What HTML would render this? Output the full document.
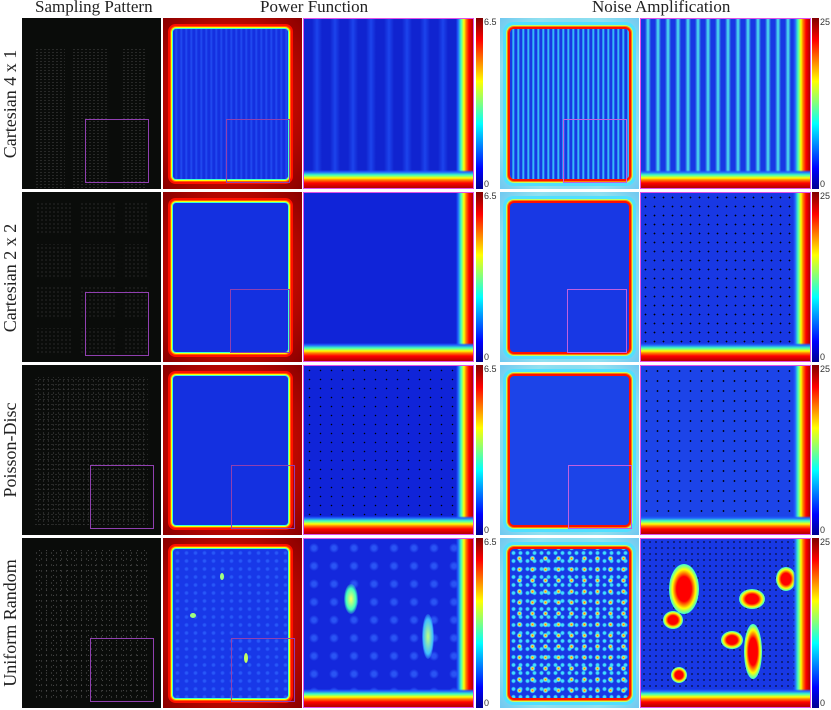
<!DOCTYPE html>
<html><head><meta charset="utf-8"><style>
*{margin:0;padding:0;box-sizing:border-box}
body{width:831px;height:710px;background:#fff;position:relative;overflow:hidden;font-family:"Liberation Serif",serif;color:#222}
.h{position:absolute;top:-3px;font-size:17px;white-space:nowrap}
.rl{position:absolute;left:-5px;width:30px;font-size:18px;white-space:nowrap;transform:rotate(-90deg);transform-origin:center;text-align:center;display:flex;justify-content:center}
.p{position:absolute;overflow:hidden}
.s{background:#0a0c0a;width:139px}
.pf{width:139px;background:radial-gradient(ellipse at center,#d81000 30%,#c00800 60%,#8a0000 100%)}
.pfi{position:absolute;left:10px;top:11px;right:14px;bottom:10px;background:#1430e0;border-radius:3px;box-shadow:0 0 0 1px #40ffd0,0 0 0 2px #ffff00,0 0 0 3px #ff6000,0 0 0 5px #ff1000;}
.pz{width:171px;background:#1024d8;border:1.5px solid #e050e8}
.nf{width:139px;background:radial-gradient(ellipse at center,#60c8f0 40%,#90e0f0 75%,#70c8f0 100%)}
.nfi{position:absolute;left:10px;top:11px;right:10px;bottom:10px;background:#1838e4;border-radius:4px;box-shadow:0 0 0 2px #ff1000,0 0 0 3px #ff8000,0 0 0 4px #c0ff60,0 0 0 7px #50e0ff}
.nz{width:171px;background:#1838e4;border:1.5px solid #e050e8}
.box{position:absolute;border:1px solid #9040b0}
.cb{position:absolute;width:7px;height:171px;background:linear-gradient(to bottom,#800000 0%,#f00 13%,#ff8000 25%,#ff0 37%,#80ff80 50%,#0ff 62%,#0080ff 75%,#00f 88%,#000090 100%)}
.cl{position:absolute;font-size:9px;font-family:"Liberation Sans",sans-serif;color:#333}
.bandR{position:absolute;top:0;bottom:0;right:0;width:17px;background:linear-gradient(to left,#b00000 0,#ff0000 4px,#ff8000 7px,#ffff00 9px,#40ffc0 12px,#2060ff 15px,rgba(20,40,216,0) 17px)}
.bandB{position:absolute;left:0;right:0;bottom:0;height:18px;background:linear-gradient(to top,#b00000 0,#ff0000 5px,#ff8000 8px,#ffff00 10px,#40ffc0 13px,#2060ff 16px,rgba(20,40,216,0) 18px)}
.bl{position:absolute;border-radius:50%}
</style></head><body>
<div class="h" style="left:35px">Sampling Pattern</div>
<div class="h" style="left:260px">Power Function</div>
<div class="h" style="left:592px">Noise Amplification</div>

<div class="rl" style="top:94px;height:20px">Cartesian 4 x 1</div>
<div class="rl" style="top:268px;height:20px">Cartesian 2 x 2</div>
<div class="rl" style="top:440px;height:20px">Poisson-Disc</div>
<div class="rl" style="top:613px;height:20px">Uniform Random</div>

<!-- Row 1 -->
<div class="p s" style="left:22px;top:18px;height:171px">
 <div style="position:absolute;left:13px;top:30px;width:30px;height:147px;background:radial-gradient(circle,#444 0.5px,transparent 0.8px) 0 0/4px 3px"></div>
 <div style="position:absolute;left:50px;top:30px;width:36px;height:147px;background:radial-gradient(circle,#444 0.5px,transparent 0.8px) 0 0/4px 3px"></div>
 <div style="position:absolute;left:100px;top:30px;width:24px;height:147px;background:radial-gradient(circle,#444 0.5px,transparent 0.8px) 0 0/4px 3px"></div>
 <div class="box" style="left:63px;top:101px;width:64px;height:64px"></div>
</div>
<div class="p pf" style="left:163px;top:18px;height:171px">
 <div class="pfi" style="background:repeating-linear-gradient(to right,#1430e0 0,#1430e0 2px,#2450f4 3px,#1430e0 5px)"></div>
 <div class="box" style="left:63px;top:101px;width:64px;height:64px"></div>
</div>
<div class="p pz" style="left:303px;top:18px;height:171px;background:repeating-linear-gradient(to right,#1024d0 0,#1024d0 8px,#1c44ec 13px,#1024d0 18px)">
 <div class="bandR"></div><div class="bandB" style="height:24px"></div>
</div>
<div class="cb" style="left:476px;top:18px"></div>
<div class="cl" style="left:484px;top:17px">6.5</div><div class="cl" style="left:484px;top:179px">0</div>
<div class="p nf" style="left:500px;top:18px;height:171px">
 <div class="nfi" style="background:repeating-linear-gradient(to right,#1838e4 0,#1838e4 2px,#40e0ff 3px,#1838e4 5px)"></div>
 <div class="box" style="left:63px;top:101px;width:64px;height:64px;border-color:#c060e0"></div>
</div>
<div class="p nz" style="left:640px;top:18px;height:171px;background:repeating-linear-gradient(to right,#1838e4 0,#1838e4 4px,#50e8f0 7px,#1838e4 10px)">
 <div class="bandR"></div><div class="bandB" style="height:26px"></div>
</div>
<div class="cb" style="left:812px;top:18px"></div>
<div class="cl" style="left:820px;top:17px">25</div><div class="cl" style="left:820px;top:179px">0</div>

<!-- Row 2 -->
<div class="p s" style="left:22px;top:192px;height:170px">
 <div style="position:absolute;left:14px;top:10px;width:112px;height:152px;background:radial-gradient(circle,#444 0.5px,transparent 0.8px) 0 0/4px 4px;-webkit-mask:repeating-linear-gradient(to right,#000 0 36px,transparent 36px 44px),repeating-linear-gradient(#000 0 33px,transparent 33px 42px);mask-composite:intersect;-webkit-mask-composite:source-in"></div>
 <div class="box" style="left:63px;top:100px;width:64px;height:64px"></div>
</div>
<div class="p pf" style="left:163px;top:192px;height:170px">
 <div class="pfi"></div>
 <div class="box" style="left:67px;top:97px;width:60px;height:64px"></div>
</div>
<div class="p pz" style="left:303px;top:192px;height:170px">
 <div class="bandR"></div><div class="bandB"></div>
</div>
<div class="cb" style="left:476px;top:192px;height:170px"></div>
<div class="cl" style="left:484px;top:191px">6.5</div><div class="cl" style="left:484px;top:352px">0</div>
<div class="p nf" style="left:500px;top:192px;height:170px">
 <div class="nfi"></div>
 <div class="box" style="left:67px;top:97px;width:60px;height:64px;border-color:#c060e0"></div>
</div>
<div class="p nz" style="left:640px;top:192px;height:170px;background:#1838e4 radial-gradient(circle,#000 0.7px,transparent 1px) 0 0/9px 9px">
 <div class="bandR"></div><div class="bandB"></div>
</div>
<div class="cb" style="left:812px;top:192px;height:170px"></div>
<div class="cl" style="left:820px;top:191px">25</div><div class="cl" style="left:820px;top:352px">0</div>

<!-- Row 3 -->
<div class="p s" style="left:22px;top:365px;height:170px">
 <div style="position:absolute;left:12px;top:12px;width:114px;height:148px;background:radial-gradient(circle,#444 0.5px,transparent 0.8px) 0 0/4px 5px,radial-gradient(circle,#444 0.5px,transparent 0.8px) 2px 2px/5px 4px"></div>
 <div class="box" style="left:68px;top:100px;width:64px;height:64px"></div>
</div>
<div class="p pf" style="left:163px;top:365px;height:170px">
 <div class="pfi" style="background:#1430e0"></div>
 <div class="box" style="left:68px;top:100px;width:64px;height:64px"></div>
</div>
<div class="p pz" style="left:303px;top:365px;height:170px;background:#1024d8 radial-gradient(circle,#000 0.6px,transparent 0.9px) 0 0/11px 9px">
 <div class="bandR"></div><div class="bandB"></div>
</div>
<div class="cb" style="left:476px;top:365px;height:170px"></div>
<div class="cl" style="left:484px;top:364px">6.5</div><div class="cl" style="left:484px;top:525px">0</div>
<div class="p nf" style="left:500px;top:365px;height:170px">
 <div class="nfi" style="background:#1c44e8"></div>
 <div class="box" style="left:68px;top:100px;width:64px;height:64px;border-color:#c060e0"></div>
</div>
<div class="p nz" style="left:640px;top:365px;height:170px;background:#1c44e8 radial-gradient(circle,#000 0.7px,transparent 1px) 0 0/11px 10px">
 <div class="bandR"></div><div class="bandB"></div>
</div>
<div class="cb" style="left:812px;top:365px;height:170px"></div>
<div class="cl" style="left:820px;top:364px">25</div><div class="cl" style="left:820px;top:525px">0</div>

<!-- Row 4 -->
<div class="p s" style="left:22px;top:538px;height:170px">
 <div style="position:absolute;left:12px;top:12px;width:114px;height:148px;background:radial-gradient(circle,#555 0.5px,transparent 0.8px) 0 0/5px 6px,radial-gradient(circle,#444 0.5px,transparent 0.8px) 2px 3px/7px 5px"></div>
 <div class="box" style="left:68px;top:100px;width:64px;height:64px"></div>
</div>
<div class="p pf" style="left:163px;top:538px;height:170px">
 <div class="pfi" style="background:#1838e8 radial-gradient(circle,#2858f8 1px,transparent 2.5px) 0 0/9px 8px"></div>
 <div class="bl" style="left:57px;top:35px;width:4px;height:7px;background:#a0ff80"></div>
 <div class="bl" style="left:27px;top:75px;width:6px;height:5px;background:#a0ff80"></div>
 <div class="bl" style="left:81px;top:115px;width:4px;height:10px;background:#c0ff60"></div>
 <div class="box" style="left:68px;top:100px;width:64px;height:64px"></div>
</div>
<div class="p pz" style="left:303px;top:538px;height:170px;background:#1428dc radial-gradient(circle,#2a54f4 2px,transparent 5px) 0 0/20px 18px">
 <div class="bl" style="left:40px;top:45px;width:14px;height:30px;background:radial-gradient(#ffff60,#40ffc0 50%,transparent 75%)"></div>
 <div class="bl" style="left:118px;top:75px;width:12px;height:45px;background:radial-gradient(#c0ff80,#40c0ff 55%,transparent 75%)"></div>
 <div class="bandR"></div><div class="bandB" style="height:24px"></div>
</div>
<div class="cb" style="left:476px;top:538px;height:170px"></div>
<div class="cl" style="left:484px;top:537px">6.5</div><div class="cl" style="left:484px;top:698px">0</div>
<div class="p nf" style="left:500px;top:538px;height:170px">
 <div class="nfi" style="background:radial-gradient(circle,#ff4000 0px,#ffe040 1px,#40e0ff 2px,rgba(0,0,0,0) 3px) 3px 4px/13px 11px,radial-gradient(circle,#40e0ff 1.2px,rgba(0,0,0,0) 2.5px) 0 0/7px 8px,#1838e4"></div>
</div>
<div class="p nz" style="left:640px;top:538px;height:170px;background:#1838e4 radial-gradient(circle,#000 0.6px,transparent 0.9px) 0 0/6px 6px">
 <div class="bl" style="left:28px;top:25px;width:30px;height:50px;background:radial-gradient(#ff0000 35%,#ffff00 55%,#40ffd0 70%,transparent 75%)"></div>
 <div class="bl" style="left:22px;top:72px;width:20px;height:18px;background:radial-gradient(#ff0000 35%,#ffff00 55%,#40ffd0 70%,transparent 75%)"></div>
 <div class="bl" style="left:98px;top:50px;width:26px;height:20px;background:radial-gradient(#ff0000 35%,#ffff00 55%,#40ffd0 70%,transparent 75%)"></div>
 <div class="bl" style="left:103px;top:85px;width:18px;height:55px;background:radial-gradient(#ff0000 35%,#ffff00 55%,#40ffd0 70%,transparent 75%)"></div>
 <div class="bl" style="left:80px;top:92px;width:22px;height:18px;background:radial-gradient(#ff0000 35%,#ffff00 55%,#40ffd0 70%,transparent 75%)"></div>
 <div class="bl" style="left:135px;top:28px;width:20px;height:24px;background:radial-gradient(#ff0000 35%,#ffff00 55%,#40ffd0 70%,transparent 75%)"></div>
 <div class="bl" style="left:30px;top:128px;width:16px;height:16px;background:radial-gradient(#ff0000 35%,#ffff00 55%,#40ffd0 70%,transparent 75%)"></div>
 <div class="bandR"></div><div class="bandB" style="height:24px"></div>
</div>
<div class="cb" style="left:812px;top:538px;height:170px"></div>
<div class="cl" style="left:820px;top:537px">25</div><div class="cl" style="left:820px;top:698px">0</div>
</body></html>
